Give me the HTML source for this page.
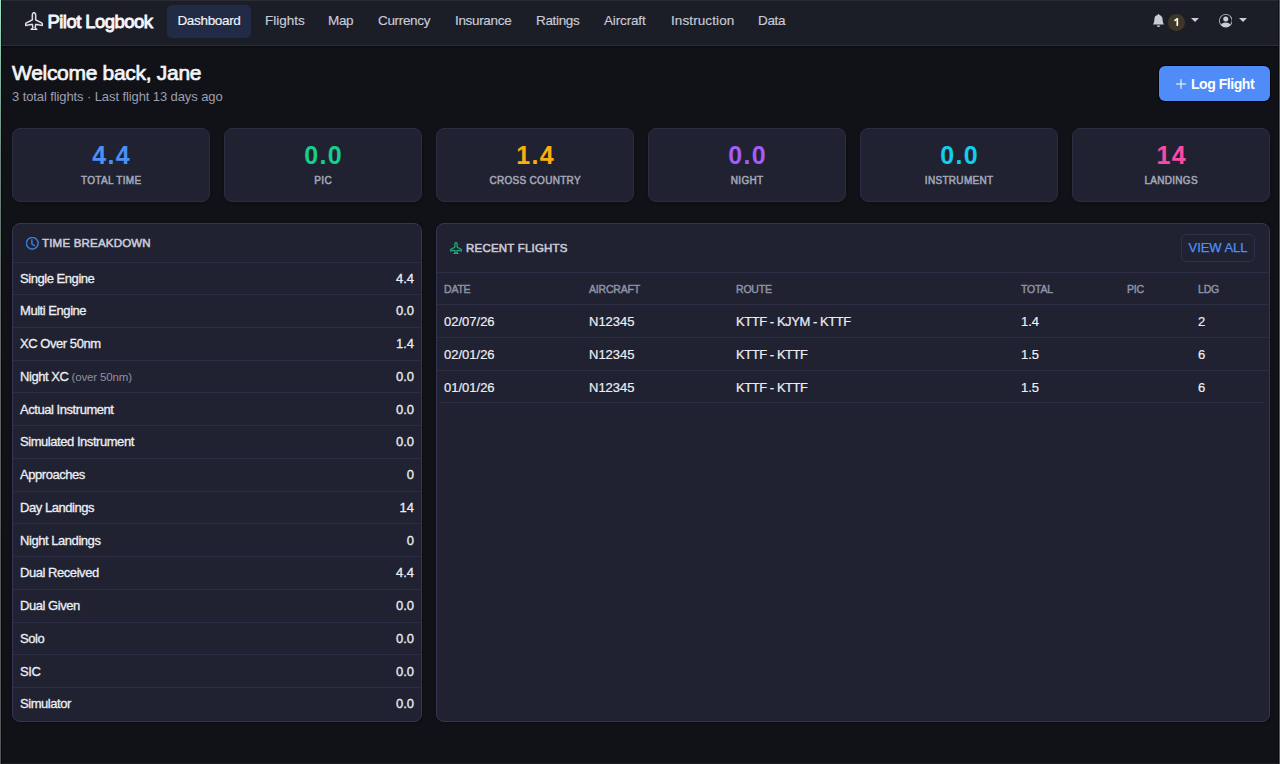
<!DOCTYPE html>
<html><head><meta charset="utf-8">
<style>
*{box-sizing:border-box;margin:0;padding:0}
html,body{width:1280px;height:764px;overflow:hidden}
body{background:#111217;font-family:"Liberation Sans",sans-serif;color:#e6e7ee;position:relative}
.edgeL{position:absolute;left:0;top:0;width:1px;height:764px;background:linear-gradient(to bottom,#98e4c6 0,#8cc8b0 45px,#6f8a80 153px,#66726c 263px,#606661 384px,#5a5d57 563px,#585858 764px);z-index:10}
.edgeL2{position:absolute;left:1px;top:0;width:1px;height:764px;background:rgba(0,0,0,0.45);z-index:10}
.edgeR2{position:absolute;left:1278px;top:0;width:1px;height:764px;background:rgba(0,0,0,0.3);z-index:10}
.edgeR{position:absolute;right:0;top:0;width:1px;height:764px;background:#55575d;z-index:10}
.edgeT{position:absolute;left:0;top:0;width:1280px;height:1px;background:#2a2c35;z-index:9}
.edgeB{position:absolute;left:0;bottom:0;width:1280px;height:1px;background:#1d1e23;z-index:9}
nav{position:absolute;left:0;top:0;width:1280px;height:46px;background:#1c1e27;border-bottom:1px solid #2b2d3d;box-shadow:0 1px 2px rgba(0,0,0,0.45)}
.lt{position:absolute;left:47.5px;top:11px;font-weight:normal;font-size:18.5px;color:#f6f6fa;letter-spacing:-0.55px;white-space:nowrap;-webkit-text-stroke:0.9px #f6f6fa}
.badge{position:absolute;left:1168px;top:14.3px;width:16.5px;height:16.5px;border-radius:50%;background:#3e3727;color:#fff;font-size:10px;font-weight:bold;text-align:center;line-height:17px}
.caret{position:absolute;top:18px;width:0;height:0;border-left:4px solid transparent;border-right:4px solid transparent;border-top:4.5px solid #c9cbd8}
.nl{position:absolute;top:4px;height:33px;line-height:34px;font-size:13.5px;letter-spacing:-0.33px;color:#c9cbd8;white-space:nowrap;-webkit-text-stroke:0.15px currentColor}
.nl.act{background:#222b46;border-radius:5px;color:#f2f3f8;top:5px;line-height:32px}
.h1{position:absolute;left:12px;top:61px;font-size:21px;font-weight:normal;letter-spacing:-0.3px;color:#f4f5f8;white-space:nowrap;-webkit-text-stroke:0.7px #f4f5f8}
.sub{position:absolute;left:12px;top:89px;font-size:13px;letter-spacing:-0.1px;color:#9c9eb0;white-space:nowrap}
.bt{position:absolute;left:32px;top:10px;font-size:14px;white-space:nowrap;letter-spacing:-0.45px}
.btn{position:absolute;left:1159px;top:66px;width:111px;height:35px;background:#4f8cf8;border-radius:6px;box-shadow:0 0 0 1px rgba(0,0,0,0.55),0 1px 2px rgba(0,0,0,0.4);color:#fff;font-size:15px;font-weight:bold}
.card{position:absolute;background:#202231;border:1px solid #2c2c43;border-radius:8px;box-shadow:0 1px 3px rgba(0,0,0,0.35)}
.stat{top:128px;width:198px;height:74px;text-align:center}
.stat .v{position:absolute;left:0;right:0;top:12px;font-size:25px;font-weight:bold;letter-spacing:1.3px;text-indent:1.3px}
.stat .l{position:absolute;left:0;right:0;top:45.5px;font-size:10px;font-weight:normal;letter-spacing:0.3px;text-indent:0.3px;color:#a4a7b8;-webkit-text-stroke:0.5px #a4a7b8}

.panel{top:223px;height:499px;border-color:#363555}
.ph{position:absolute;left:0;right:0;top:0;border-bottom:1px solid #2d2d45}
.pt{position:absolute;font-size:11.5px;font-weight:normal;letter-spacing:0.2px;color:#c9cbd9;white-space:nowrap;-webkit-text-stroke:0.55px #c9cbd9;margin-top:-0.5px}
.row{position:absolute;left:0;right:0;height:32px;border-bottom:1px solid #2d2d45;font-size:13px;color:#eceef4;-webkit-text-stroke:0.3px #eceef4}
.row small{-webkit-text-stroke:0}
.row .a{position:absolute;left:7px;top:7.5px;letter-spacing:-0.45px;white-space:nowrap}
.row .b{position:absolute;right:7px;top:7.5px}
.row small{font-size:11.5px;color:#8d90a2;letter-spacing:-0.15px}
.th{position:absolute;top:283px;font-size:10.5px;font-weight:normal;letter-spacing:-0.2px;color:#8f92a5;-webkit-text-stroke:0.45px #8f92a5}
.td{position:absolute;font-size:13px;color:#eceef4;white-space:nowrap;-webkit-text-stroke:0.2px #eceef4}
.hl{position:absolute;left:437px;width:832px;height:1px;background:#2d2d45}
.va{position:absolute;left:1181px;top:234px;width:74px;height:28px;border:1px solid #30304a;border-radius:5px;color:#4f8ef7;font-size:13px;letter-spacing:-0.05px;-webkit-text-stroke:0.25px #4f8ef7;line-height:26px;text-align:center}
</style></head><body>
<div class="edgeL"></div><div class="edgeL2"></div><div class="edgeR2"></div><div class="edgeR"></div><div class="edgeT"></div><div class="edgeB"></div>
<nav>
  <div class="logo">
    <svg style="position:absolute;left:25px;top:12px" width="18" height="18" viewBox="0 0 16 16" fill="#ececf2" stroke="#ececf2" stroke-width="0.25"><path d="M6.428 1.151C6.708.591 7.213 0 8 0s1.292.592 1.572 1.151C9.861 1.73 10 2.431 10 3v3.691l5.17 2.585a1.5 1.5 0 0 1 .83 1.342V12a.5.5 0 0 1-.582.493l-5.507-.918-.375 2.253 1.318 1.318A.5.5 0 0 1 10.5 16h-5a.5.5 0 0 1-.354-.854l1.319-1.318-.376-2.253-5.507.918A.5.5 0 0 1 0 12v-1.382a1.5 1.5 0 0 1 .83-1.342L6 6.691V3c0-.568.14-1.271.428-1.849m.894.448C7.111 2.02 7 2.569 7 3v4a.5.5 0 0 1-.276.447l-5.448 2.724a.5.5 0 0 0-.276.447v.792l5.418-.903a.5.5 0 0 1 .575.41l.5 3a.5.5 0 0 1-.14.437L6.708 15h2.586l-.647-.646a.5.5 0 0 1-.14-.436l.5-3a.5.5 0 0 1 .576-.411L15 11.41v-.792a.5.5 0 0 0-.276-.447L9.276 7.447A.5.5 0 0 1 9 7V3c0-.432-.11-.979-.322-1.401C8.458 1.159 8.213 1 8 1s-.458.158-.678.599"/></svg>
    <span class="lt">Pilot Logbook</span>
  </div>
  <svg style="position:absolute;left:1151.5px;top:14px" width="13" height="13" viewBox="0 0 16 16" fill="#c9cbd8"><path d="M8 16a2 2 0 0 0 2-2H6a2 2 0 0 0 2 2m.995-14.901a1 1 0 1 0-1.99 0A5 5 0 0 0 3 6c0 1.098-.5 6-2 7h14c-1.5-1-2-5.902-2-7 0-2.42-1.72-4.44-4.005-4.901"/></svg>
  <div class="badge"></div><svg style="position:absolute;left:1173px;top:17px" width="6" height="10" viewBox="0 0 6 10"><path d="M4.3 1.8 V8.2" stroke="#fff" stroke-width="1.7" stroke-linecap="round"/><path d="M4.3 1.8 L1.9 3.4" stroke="#fff" stroke-width="1.6" stroke-linecap="round"/></svg>
  <div class="caret" style="left:1191px"></div>
  <svg style="position:absolute;left:1218.5px;top:14.2px" width="13.5" height="13.5" viewBox="0 0 16 16" fill="#c9cbd8"><path d="M11 6a3 3 0 1 1-6 0 3 3 0 0 1 6 0"/><path fill-rule="evenodd" d="M0 8a8 8 0 1 1 16 0A8 8 0 0 1 0 8m8-7a7 7 0 0 0-5.468 11.37C3.242 11.226 4.805 10 8 10s4.757 1.225 5.468 2.37A7 7 0 0 0 8 1"/></svg>
  <div class="caret" style="left:1238.5px"></div>
  <div class="nl act" style="left:167px;width:84px;text-align:center">Dashboard</div>
  <div class="nl" style="left:265px;letter-spacing:0px">Flights</div>
  <div class="nl" style="left:328px">Map</div>
  <div class="nl" style="left:378px">Currency</div>
  <div class="nl" style="left:455px">Insurance</div>
  <div class="nl" style="left:536px">Ratings</div>
  <div class="nl" style="left:604px;letter-spacing:-0.15px">Aircraft</div>
  <div class="nl" style="left:671px;letter-spacing:0.1px">Instruction</div>
  <div class="nl" style="left:758px">Data</div>
</nav>
<div class="h1">Welcome back, Jane</div>
<div class="sub">3 total flights · Last flight 13 days ago</div>
<div class="btn"><svg style="position:absolute;left:15.7px;top:11.85px" width="12" height="12" viewBox="0 0 16 16" fill="#fff"><path fill-rule="evenodd" d="M8 1.2a.7.7 0 0 1 .7.7v5.4h5.4a.7.7 0 0 1 0 1.4H8.7v5.4a.7.7 0 0 1-1.4 0V8.7H1.9a.7.7 0 0 1 0-1.4h5.4V1.9A.7.7 0 0 1 8 1.2"/></svg><span class="bt">Log Flight</span></div>

<div class="card stat" style="left:12px"><div class="v" style="color:#4a90f8">4.4</div><div class="l">TOTAL TIME</div></div>
<div class="card stat" style="left:224px"><div class="v" style="color:#15cf8e">0.0</div><div class="l">PIC</div></div>
<div class="card stat" style="left:436px"><div class="v" style="color:#fdae0b">1.4</div><div class="l">CROSS COUNTRY</div></div>
<div class="card stat" style="left:648px"><div class="v" style="color:#a45cfb">0.0</div><div class="l">NIGHT</div></div>
<div class="card stat" style="left:860px"><div class="v" style="color:#12cdf0">0.0</div><div class="l">INSTRUMENT</div></div>
<div class="card stat" style="left:1072px"><div class="v" style="color:#fb4aa6">14</div><div class="l">LANDINGS</div></div>


<div class="card panel" style="left:12px;width:410px">
  <div class="ph" style="height:39px"></div>
  <svg style="position:absolute;left:13px;top:13px" width="12.5" height="12.5" viewBox="0 0 16 16" fill="#3d84ee" stroke="#3d84ee" stroke-width="0.8"><path d="M8 3.5a.5.5 0 0 0-1 0V9a.5.5 0 0 0 .252.434l3.5 2a.5.5 0 0 0 .496-.868L8 8.71z"/><path d="M8 16A8 8 0 1 0 8 0a8 8 0 0 0 0 16m7-8A7 7 0 1 1 1 8a7 7 0 0 1 14 0"/></svg>
  <div class="pt" style="left:29px;top:13px">TIME BREAKDOWN</div>
  <div class="row" style="top:39.00px"><span class="a">Single Engine</span><span class="b">4.4</span></div>
  <div class="row" style="top:71.75px"><span class="a">Multi Engine</span><span class="b">0.0</span></div>
  <div class="row" style="top:104.50px"><span class="a">XC Over 50nm</span><span class="b">1.4</span></div>
  <div class="row" style="top:137.25px"><span class="a">Night XC <small>(over 50nm)</small></span><span class="b">0.0</span></div>
  <div class="row" style="top:170.00px"><span class="a">Actual Instrument</span><span class="b">0.0</span></div>
  <div class="row" style="top:202.75px"><span class="a">Simulated Instrument</span><span class="b">0.0</span></div>
  <div class="row" style="top:235.50px"><span class="a">Approaches</span><span class="b">0</span></div>
  <div class="row" style="top:268.25px"><span class="a">Day Landings</span><span class="b">14</span></div>
  <div class="row" style="top:301.00px"><span class="a">Night Landings</span><span class="b">0</span></div>
  <div class="row" style="top:333.75px"><span class="a">Dual Received</span><span class="b">4.4</span></div>
  <div class="row" style="top:366.50px"><span class="a">Dual Given</span><span class="b">0.0</span></div>
  <div class="row" style="top:399.25px"><span class="a">Solo</span><span class="b">0.0</span></div>
  <div class="row" style="top:432.00px"><span class="a">SIC</span><span class="b">0.0</span></div>
  <div class="row" style="top:464.75px;border-bottom:none"><span class="a">Simulator</span><span class="b">0.0</span></div>
</div>

<div class="card panel" style="left:436px;width:834px"></div>
<div class="hl" style="top:272px"></div>
<svg style="position:absolute;left:450.2px;top:242.1px" width="12" height="12" viewBox="0 0 16 16" fill="#20bd87" stroke="#20bd87" stroke-width="0.5"><path d="M6.428 1.151C6.708.591 7.213 0 8 0s1.292.592 1.572 1.151C9.861 1.73 10 2.431 10 3v3.691l5.17 2.585a1.5 1.5 0 0 1 .83 1.342V12a.5.5 0 0 1-.582.493l-5.507-.918-.375 2.253 1.318 1.318A.5.5 0 0 1 10.5 16h-5a.5.5 0 0 1-.354-.854l1.319-1.318-.376-2.253-5.507.918A.5.5 0 0 1 0 12v-1.382a1.5 1.5 0 0 1 .83-1.342L6 6.691V3c0-.568.14-1.271.428-1.849m.894.448C7.111 2.020 7 2.569 7 3v4a.5.5 0 0 1-.276.447l-5.448 2.724a.5.5 0 0 0-.276.447v.792l5.418-.903a.5.5 0 0 1 .575.41l.5 3a.5.5 0 0 1-.14.437L6.708 15h2.586l-.647-.646a.5.5 0 0 1-.14-.436l.5-3a.5.5 0 0 1 .576-.411L15 11.41v-.792a.5.5 0 0 0-.276-.447L9.276 7.447A.5.5 0 0 1 9 7V3c0-.432-.11-.979-.322-1.401C8.458 1.159 8.213 1 8 1s-.458.158-.678.599"/></svg>
<div class="pt" style="left:466px;top:242px">RECENT FLIGHTS</div>
<div class="va">VIEW ALL</div>
<div class="th" style="left:444px">DATE</div>
<div class="th" style="left:589px">AIRCRAFT</div>
<div class="th" style="left:736px">ROUTE</div>
<div class="th" style="left:1021px">TOTAL</div>
<div class="th" style="left:1127px">PIC</div>
<div class="th" style="left:1198px">LDG</div>
<div class="hl" style="top:304px"></div>
<div class="td" style="left:444px;top:314px">02/07/26</div>
<div class="td" style="left:589px;top:314px">N12345</div>
<div class="td" style="left:736px;top:314px;letter-spacing:-0.45px">KTTF - KJYM - KTTF</div>
<div class="td" style="left:1021px;top:314px">1.4</div>
<div class="td" style="left:1198px;top:314px">2</div>
<div class="hl" style="top:337px"></div>
<div class="td" style="left:444px;top:346.75px">02/01/26</div>
<div class="td" style="left:589px;top:346.75px">N12345</div>
<div class="td" style="left:736px;top:346.75px;letter-spacing:-0.45px">KTTF - KTTF</div>
<div class="td" style="left:1021px;top:346.75px">1.5</div>
<div class="td" style="left:1198px;top:346.75px">6</div>
<div class="hl" style="top:370px"></div>
<div class="td" style="left:444px;top:379.5px">01/01/26</div>
<div class="td" style="left:589px;top:379.5px">N12345</div>
<div class="td" style="left:736px;top:379.5px;letter-spacing:-0.45px">KTTF - KTTF</div>
<div class="td" style="left:1021px;top:379.5px">1.5</div>
<div class="td" style="left:1198px;top:379.5px">6</div>
<div class="hl" style="top:402px;left:441px;width:823px"></div>
</body></html>
